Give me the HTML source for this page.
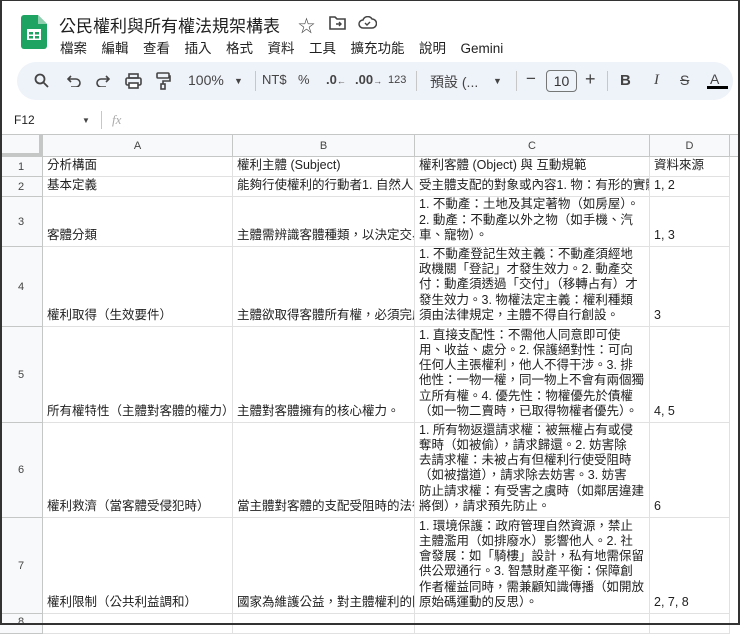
<!DOCTYPE html>
<html><head><meta charset="utf-8"><style>
*{margin:0;padding:0;box-sizing:border-box}
body{width:740px;height:625px;overflow:hidden;background:#fff;font-family:"Liberation Sans","Noto Sans CJK TC",sans-serif;color:#1f1f1f;position:relative}
.frame{position:absolute;left:0;top:0;width:740px;height:625px;border:2px solid #333;border-top-width:1px;pointer-events:none;z-index:10}
.abs{position:absolute}
.menu span{margin-right:14.5px}
.tb{position:absolute;left:17px;top:62px;width:716px;height:38px;background:#eef2f9;border-radius:19px}
.ti{position:absolute;top:72px;font-size:14px;color:#444}
.sep{position:absolute;top:71px;width:1px;height:20px;background:#c7c7c7}
.cell{position:absolute;overflow:hidden;white-space:nowrap;font-size:12.5px;line-height:15.2px;padding:0 3px 3px 4px;display:flex;align-items:flex-end;border-right:1px solid #e1e1e1;border-bottom:1px solid #e1e1e1}
.rh{position:absolute;left:0;width:43px;background:#f8f9fa;border-right:1px solid #c4c7c5;border-bottom:1px solid #c4c7c5;font-size:11px;color:#444;display:flex;align-items:center;justify-content:center}
.ch{position:absolute;top:135px;height:22px;background:#f8f9fa;border-right:1px solid #c4c7c5;border-bottom:1px solid #c4c7c5;font-size:11px;color:#444;display:flex;align-items:center;justify-content:center}
</style></head><body>
<div class="frame"></div>
<svg class="abs" style="left:21px;top:15px" width="26" height="34" viewBox="0 0 26 34"><path d="M3 0h14l9 9v22a3 3 0 0 1-3 3H3a3 3 0 0 1-3-3V3a3 3 0 0 1 3-3z" fill="#1ea362"/><path d="M17 0v9h9z" fill="#8ed1b1"/><rect x="6" y="14" width="14" height="11" fill="#fff"/><rect x="8" y="17" width="4" height="2.5" fill="#1ea362"/><rect x="14" y="17" width="4" height="2.5" fill="#1ea362"/><rect x="8" y="21" width="4" height="2.5" fill="#1ea362"/><rect x="14" y="21" width="4" height="2.5" fill="#1ea362"/></svg>
<div class="abs" style="left:59px;top:12px;font-size:17px;color:#1f1f1f">公民權利與所有權法規架構表</div>
<div class="abs" style="left:298px;top:12px;font-size:17px;color:#444">☆</div>
<svg class="abs" style="left:329px;top:16px" width="17" height="14" viewBox="0 0 17 14"><path d="M1 1h5l2 2h8v10H1z" fill="none" stroke="#444" stroke-width="1.6"/><path d="M7 8h5M10 6l2 2-2 2" fill="none" stroke="#444" stroke-width="1.4"/></svg>
<svg class="abs" style="left:358px;top:16px" width="19" height="13" viewBox="0 0 19 13"><path d="M5 12a4 4 0 0 1 0-8 5 5 0 0 1 9-1 4 4 0 0 1 0 9z" fill="none" stroke="#444" stroke-width="1.5"/><path d="M7 7l2 2 3-3" fill="none" stroke="#444" stroke-width="1.4"/></svg>
<div class="abs menu" style="left:60px;top:37px;font-size:13.5px;color:#1f1f1f"><span>檔案</span><span>編輯</span><span>查看</span><span>插入</span><span>格式</span><span>資料</span><span>工具</span><span>擴充功能</span><span>說明</span><span>Gemini</span></div>
<div class="tb"></div>
<svg class="abs" style="left:34px;top:73px" width="15" height="15" viewBox="0 0 15 15"><circle cx="6" cy="6" r="4.5" fill="none" stroke="#444" stroke-width="1.8"/><path d="M9.5 9.5l4.5 4.5" stroke="#444" stroke-width="1.8"/></svg>
<svg class="abs" style="left:67px;top:75px" width="14" height="12" viewBox="0 0 14 12"><path d="M2 4h7a4 4 0 0 1 0 8H4M4 1L1 4l3 3" fill="none" stroke="#444" stroke-width="1.6"/></svg>
<svg class="abs" style="left:96px;top:75px" width="14" height="12" viewBox="0 0 14 12"><path d="M12 4H5a4 4 0 0 0 0 8h5M10 1l3 3-3 3" fill="none" stroke="#444" stroke-width="1.6"/></svg>
<svg class="abs" style="left:125px;top:73px" width="17" height="16" viewBox="0 0 17 16"><rect x="4" y="1" width="9" height="4" fill="none" stroke="#444" stroke-width="1.6"/><rect x="1" y="5" width="15" height="7" rx="1.5" fill="none" stroke="#444" stroke-width="1.6"/><rect x="4" y="10" width="9" height="5" fill="#fff" stroke="#444" stroke-width="1.6"/></svg>
<svg class="abs" style="left:156px;top:72px" width="15" height="18" viewBox="0 0 15 18"><rect x="1" y="1" width="12" height="5" rx="1" fill="none" stroke="#444" stroke-width="1.6"/><path d="M13 4h1v5H7v3" fill="none" stroke="#444" stroke-width="1.6"/><rect x="5" y="12" width="4" height="5" fill="none" stroke="#444" stroke-width="1.6"/></svg>
<div class="ti" style="left:188px">100%</div>
<div class="ti" style="left:234px;font-size:9px;top:76px">▼</div>
<div class="sep" style="left:255px"></div>
<div class="ti" style="left:262px;font-size:13px">NT$</div>
<div class="ti" style="left:298px;font-size:13px">%</div>
<div class="ti" style="left:326px;font-size:13px;font-weight:bold">.0<span style="font-size:9px">←</span></div>
<div class="ti" style="left:355px;font-size:13px;font-weight:bold">.00<span style="font-size:9px">→</span></div>
<div class="ti" style="left:388px;font-size:11px;top:74px">123</div>
<div class="sep" style="left:416px"></div>
<div class="ti" style="left:430px">預設 (...</div>
<div class="ti" style="left:493px;font-size:9px;top:76px">▼</div>
<div class="sep" style="left:516px"></div>
<div class="ti" style="left:526px;font-size:17px;top:69px">−</div>
<div class="abs" style="left:546px;top:70px;width:31px;height:22px;border:1px solid #747775;border-radius:4px;font-size:14px;text-align:center;line-height:20px;color:#333">10</div>
<div class="ti" style="left:585px;font-size:18px;top:69px">+</div>
<div class="sep" style="left:607px"></div>
<div class="ti" style="left:620px;font-weight:bold;font-size:15px">B</div>
<div class="ti" style="left:654px;font-style:italic;font-size:15px;font-family:'Liberation Serif',serif">I</div>
<div class="ti" style="left:680px;font-size:14px;text-decoration:line-through">S</div>
<div class="ti" style="left:710px;font-size:14px;top:71px">A</div>
<div class="abs" style="left:707px;top:86px;width:21px;height:3px;background:#000"></div>
<div class="abs" style="left:14px;top:113px;font-size:12px;color:#1f1f1f">F12</div>
<div class="abs" style="left:82px;top:116px;font-size:8px;color:#444">▼</div>
<div class="abs" style="left:101px;top:111px;width:1px;height:18px;background:#c7c7c7"></div>
<div class="abs" style="left:112px;top:112px;font-size:13px;color:#aaa;font-style:italic;font-family:'Liberation Serif',serif">fx</div>
<div class="abs" style="left:0;top:134px;width:740px;height:1px;background:#c4c7c5"></div>
<div class="abs" style="left:0;top:135px;width:43px;height:22px;background:#f8f9fa;border-right:4px solid #c4c7c5;border-bottom:4px solid #c4c7c5"></div>
<div class="ch" style="left:43px;width:190px">A</div>
<div class="ch" style="left:233px;width:182px">B</div>
<div class="ch" style="left:415px;width:235px">C</div>
<div class="ch" style="left:650px;width:80px">D</div>
<div class="ch" style="left:730px;width:10px"></div>
<div class="rh" style="top:157px;height:20px">1</div>
<div class="rh" style="top:177px;height:20px">2</div>
<div class="rh" style="top:197px;height:50px">3</div>
<div class="rh" style="top:247px;height:80px">4</div>
<div class="rh" style="top:327px;height:96px">5</div>
<div class="rh" style="top:423px;height:95px">6</div>
<div class="rh" style="top:518px;height:96px">7</div>
<div class="rh" style="top:614px;height:20px;align-items:flex-start;padding-top:2px">8</div>
<div class="cell" style="left:43px;top:157px;width:190px;height:20px">分析構面</div>
<div class="cell" style="left:233px;top:157px;width:182px;height:20px">權利主體 (Subject)</div>
<div class="cell" style="left:415px;top:157px;width:235px;height:20px">權利客體 (Object) 與 互動規範</div>
<div class="cell" style="left:650px;top:157px;width:80px;height:20px">資料來源</div>
<div class="cell" style="left:43px;top:177px;width:190px;height:20px">基本定義</div>
<div class="cell" style="left:233px;top:177px;width:182px;height:20px">能夠行使權利的行動者1. 自然人</div>
<div class="cell" style="left:415px;top:177px;width:235px;height:20px">受主體支配的對象或內容1. 物：有形的實體</div>
<div class="cell" style="left:650px;top:177px;width:80px;height:20px">1, 2</div>
<div class="cell" style="left:43px;top:197px;width:190px;height:50px">客體分類</div>
<div class="cell" style="left:233px;top:197px;width:182px;height:50px">主體需辨識客體種類，以決定交易</div>
<div class="cell" style="left:415px;top:197px;width:235px;height:50px">1. 不動產：土地及其定著物（如房屋）。<br>2. 動產：不動產以外之物（如手機、汽<br>車、寵物）。</div>
<div class="cell" style="left:650px;top:197px;width:80px;height:50px">1, 3</div>
<div class="cell" style="left:43px;top:247px;width:190px;height:80px">權利取得（生效要件）</div>
<div class="cell" style="left:233px;top:247px;width:182px;height:80px">主體欲取得客體所有權，必須完成</div>
<div class="cell" style="left:415px;top:247px;width:235px;height:80px">1. 不動產登記生效主義：不動產須經地<br>政機關「登記」才發生效力。2. 動產交<br>付：動產須透過「交付」（移轉占有）才<br>發生效力。3. 物權法定主義：權利種類<br>須由法律規定，主體不得自行創設。</div>
<div class="cell" style="left:650px;top:247px;width:80px;height:80px">3</div>
<div class="cell" style="left:43px;top:327px;width:190px;height:96px">所有權特性（主體對客體的權力）</div>
<div class="cell" style="left:233px;top:327px;width:182px;height:96px">主體對客體擁有的核心權力。</div>
<div class="cell" style="left:415px;top:327px;width:235px;height:96px">1. 直接支配性：不需他人同意即可使<br>用、收益、處分。2. 保護絕對性：可向<br>任何人主張權利，他人不得干涉。3. 排<br>他性：一物一權，同一物上不會有兩個獨<br>立所有權。4. 優先性：物權優先於債權<br>（如一物二賣時，已取得物權者優先）。</div>
<div class="cell" style="left:650px;top:327px;width:80px;height:96px">4, 5</div>
<div class="cell" style="left:43px;top:423px;width:190px;height:95px">權利救濟（當客體受侵犯時）</div>
<div class="cell" style="left:233px;top:423px;width:182px;height:95px">當主體對客體的支配受阻時的法律</div>
<div class="cell" style="left:415px;top:423px;width:235px;height:95px">1. 所有物返還請求權：被無權占有或侵<br>奪時（如被偷），請求歸還。2. 妨害除<br>去請求權：未被占有但權利行使受阻時<br>（如被擋道），請求除去妨害。3. 妨害<br>防止請求權：有受害之虞時（如鄰居違建<br>將倒），請求預先防止。</div>
<div class="cell" style="left:650px;top:423px;width:80px;height:95px">6</div>
<div class="cell" style="left:43px;top:518px;width:190px;height:96px">權利限制（公共利益調和）</div>
<div class="cell" style="left:233px;top:518px;width:182px;height:96px">國家為維護公益，對主體權利的限</div>
<div class="cell" style="left:415px;top:518px;width:235px;height:96px">1. 環境保護：政府管理自然資源，禁止<br>主體濫用（如排廢水）影響他人。2. 社<br>會發展：如「騎樓」設計，私有地需保留<br>供公眾通行。3. 智慧財產平衡：保障創<br>作者權益同時，需兼顧知識傳播（如開放<br>原始碼運動的反思）。</div>
<div class="cell" style="left:650px;top:518px;width:80px;height:96px">2, 7, 8</div>
<div class="cell" style="left:43px;top:614px;width:190px;height:20px"></div>
<div class="cell" style="left:233px;top:614px;width:182px;height:20px"></div>
<div class="cell" style="left:415px;top:614px;width:235px;height:20px"></div>
<div class="cell" style="left:650px;top:614px;width:80px;height:20px"></div>
</body></html>
